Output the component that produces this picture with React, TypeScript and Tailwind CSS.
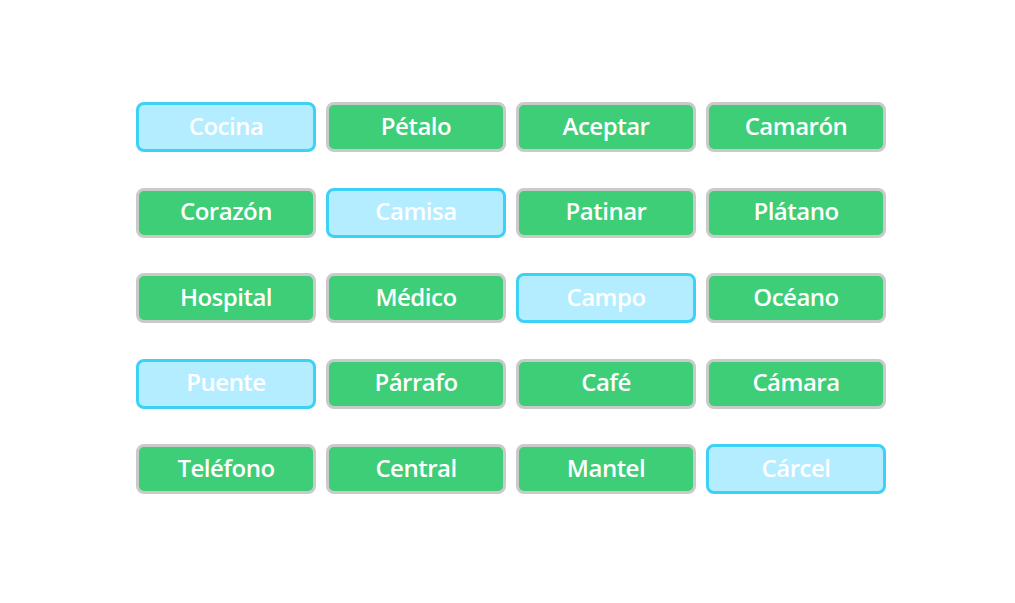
const words = [
  'Cocina', 'Pétalo', 'Aceptar', 'Camarón',
  'Corazón', 'Camisa', 'Patinar', 'Plátano',
  'Hospital', 'Médico', 'Campo', 'Océano',
  'Puente', 'Párrafo', 'Café', 'Cámara',
  'Teléfono', 'Central', 'Mantel', 'Cárcel',
];

const selected = ['Cocina', 'Camisa', 'Campo', 'Puente', 'Cárcel'];

export default function App() {
  return (
    <div className="w-[1015px] h-[603px] bg-white pt-[102px] pl-[136px]" style={{ fontFamily: '"Open Sans", "Noto Sans", sans-serif' }}>
      <div className="grid grid-cols-[repeat(4,180px)] gap-x-[10px] gap-y-[35.5px]">
        {words.map((w) => {
          const on = selected.includes(w);
          return (
            <button
              key={w}
              className={
                on
                  ? 'h-[50px] pb-[3px] leading-none rounded-lg border-[3px] border-[#3dd1f5] bg-[#b4edff] text-white text-[24px] font-[650] tracking-[-0.5px]'
                  : 'h-[50px] pb-[3px] leading-none rounded-lg border-[3px] border-[#cacaca] bg-[#3dce77] text-white text-[24px] font-[650] tracking-[-0.5px]'
              }
            >
              {w}
            </button>
          );
        })}
      </div>
    </div>
  );
}
